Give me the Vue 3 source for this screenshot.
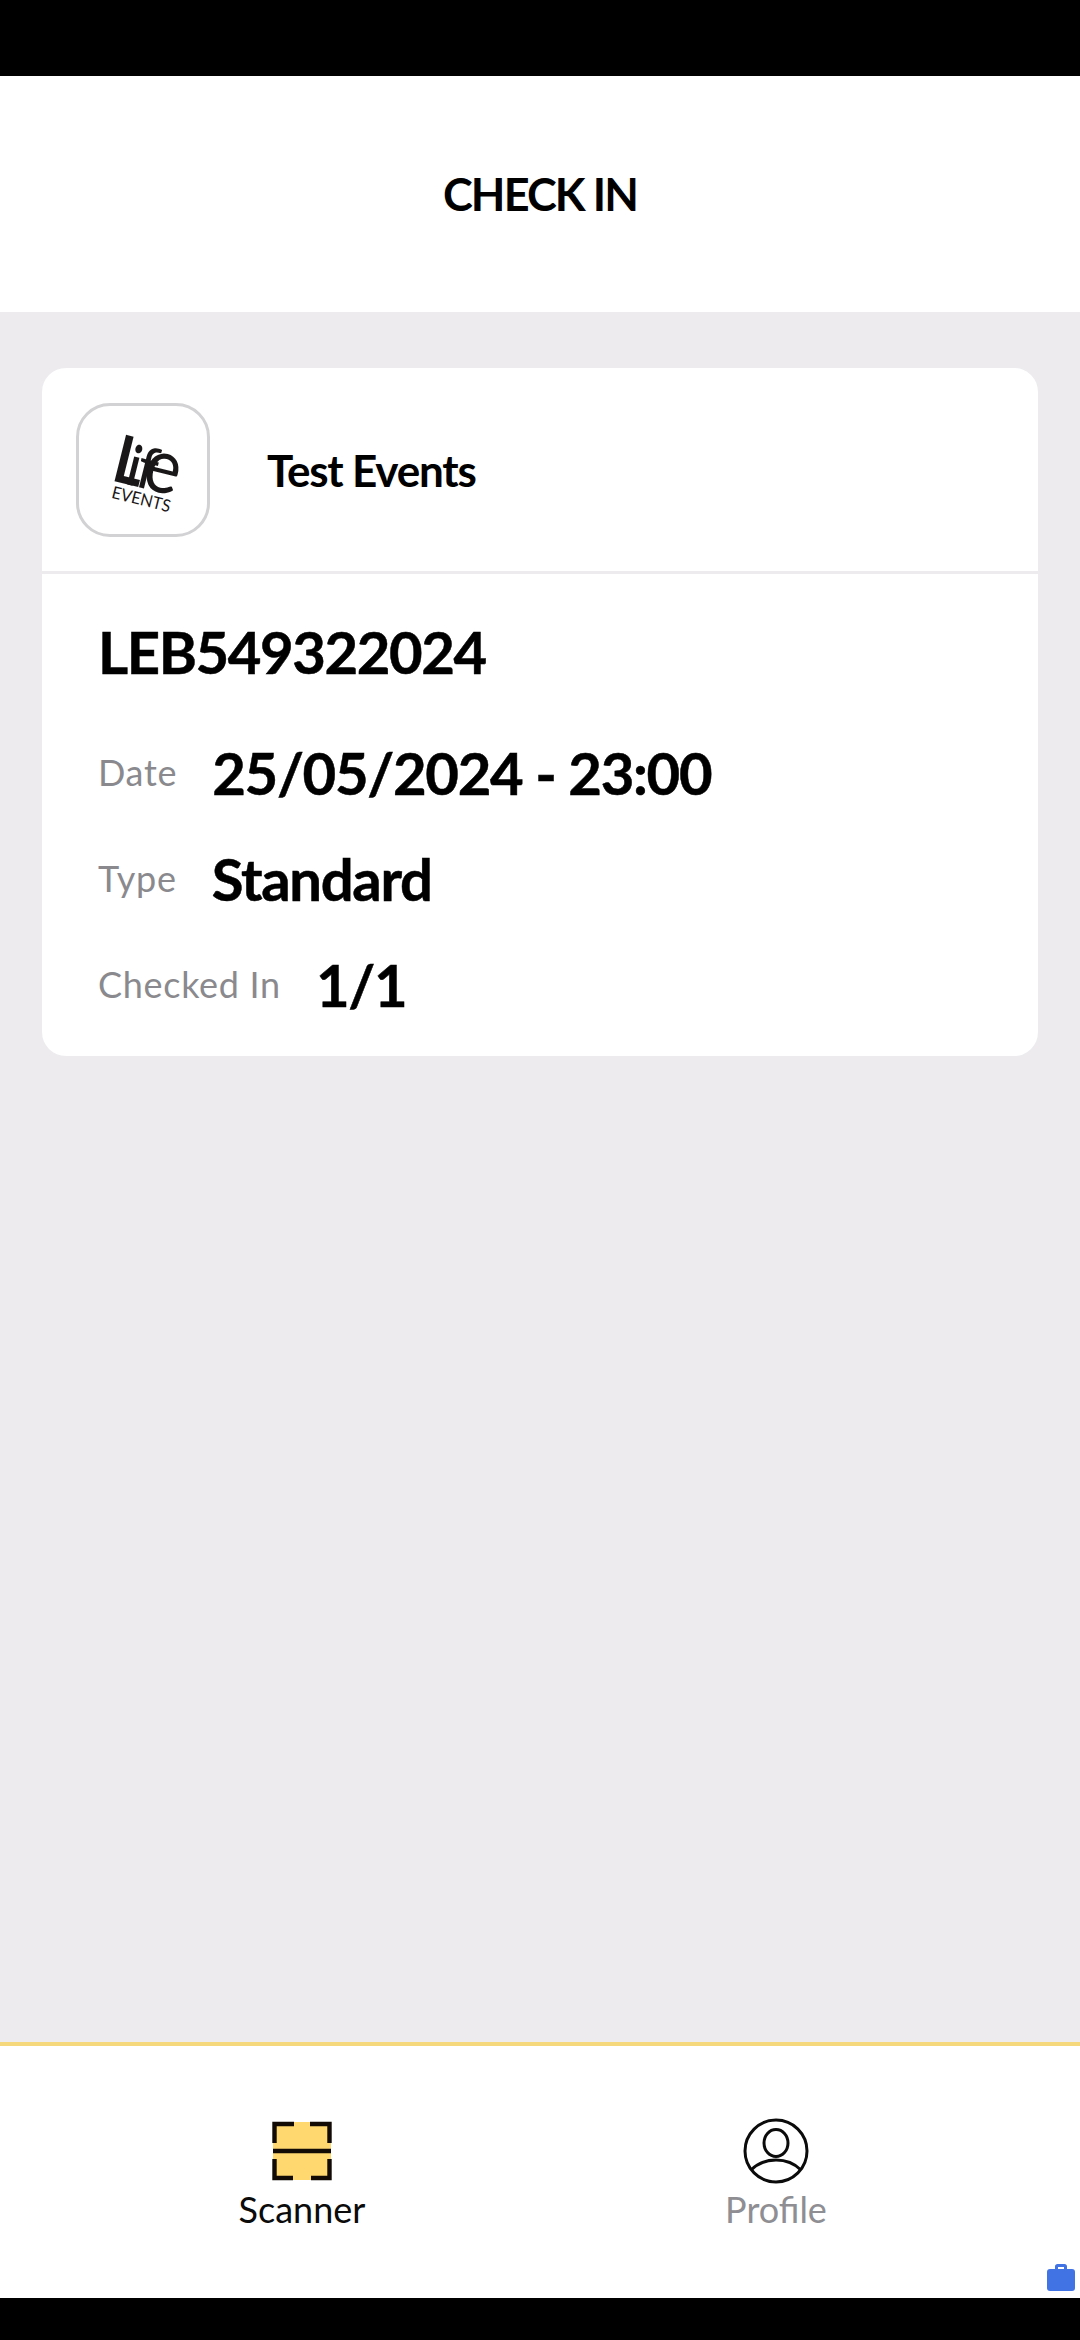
<script setup>
const rows = [
  { label: 'Date', value: '25/05/2024 - 23:00' },
  { label: 'Type', value: 'Standard' },
  { label: 'Checked In', value: '1/1' },
]
</script>

<template>
  <div class="screen">
    <div class="black top"></div>
    <header class="head">CHECK IN</header>
    <main class="main">
      <section class="card">
        <div class="org">
          <div class="logo">
            <svg width="128" height="128" viewBox="3 3 128 128">
              <g transform="translate(5 2) rotate(14 67 67)" fill="#1a1718" font-family="Lato, sans-serif">
                <text x="32" y="84" font-size="66" font-weight="700" textLength="30" lengthAdjust="spacingAndGlyphs">L</text>
                <text x="47" y="84" font-size="56" font-weight="700" textLength="11" lengthAdjust="spacingAndGlyphs">i</text>
                <text x="56" y="84" font-size="58" font-weight="400" textLength="20" lengthAdjust="spacingAndGlyphs">f</text>
                <text x="63" y="84" font-size="76" font-weight="400" textLength="36" lengthAdjust="spacingAndGlyphs">e</text>
                <text x="37" y="101" font-size="17" textLength="60" lengthAdjust="spacingAndGlyphs">EVENTS</text>
              </g>
            </svg>
          </div>
          <div class="org-name">Test Events</div>
        </div>
        <div class="body">
          <div class="code">LEB549322024</div>
          <div v-for="r in rows" :key="r.label" class="row">
            <span class="label">{{ r.label }}</span>
            <span class="value">{{ r.value }}</span>
          </div>
        </div>
      </section>
    </main>
    <nav class="tabs">
      <div class="tab first active">
        <div class="icon">
          <svg width="60" height="60" viewBox="0 0 60 60" fill="none">
            <rect x="1" y="1" width="58" height="58" fill="#ffd96f"/>
            <path d="M22 3H2.500V22M38 3H57.500V22M2.500 38V57H21M57.500 38V57H39" stroke="#120b05" stroke-width="4.400"/>
            <path d="M1 30H59" stroke="#120b05" stroke-width="4.400"/>
          </svg>
        </div>
        <span>Scanner</span>
      </div>
      <div class="tab second">
        <div class="icon">
          <svg width="66" height="66" viewBox="0 0 66 66" fill="none" stroke="#0b0b0b" stroke-width="3">
            <ellipse cx="33" cy="33" rx="31" ry="31"/>
            <ellipse cx="33" cy="25" rx="12" ry="13.500"/>
            <path d="M8 52C15 45 24 42 33 42C42 42 51 45 58 52"/>
          </svg>
        </div>
        <span>Profile</span>
      </div>
    </nav>
    <div class="black bottom"></div>
    <svg class="case" width="30" height="30" viewBox="0 0 30 30">
      <path d="M9 8V4.500C9 3 10 2 11.500 2H18.500C20 2 21 3 21 4.500V8H18V5H12V8Z" fill="#4273e4"/>
      <rect x="1" y="7" width="28" height="22" rx="3" fill="#4273e4"/>
    </svg>
  </div>
</template>

<style>
html, body { margin: 0; background: #fff; }
</style>

<style scoped>
.screen {
  position: relative;
  width: 1080px;
  height: 2340px;
  display: flex;
  flex-direction: column;
  font-family: Lato, sans-serif;
  overflow: hidden;
  background: #fff;
}
.black { background: #000; flex: none; }
.top { height: 76px; }
.bottom { height: 42px; }
.head {
  height: 236px;
  flex: none;
  display: flex;
  align-items: center;
  justify-content: center;
  font-size: 45px;
  font-weight: 700;
  letter-spacing: -1.900px;
  color: #000;
}
.main {
  flex: 1;
  background: #edebee;
  padding: 56px 42px;
}
.card {
  background: #fff;
  border-radius: 24px;
  height: 688px;
  overflow: hidden;
}
.org {
  height: 203px;
  border-bottom: 3px solid #edebee;
  display: flex;
  align-items: center;
  padding-left: 34px;
}
.logo {
  width: 134px;
  height: 134px;
  box-sizing: border-box;
  border: 3px solid #d2d1d3;
  border-radius: 34px;
  display: flex;
  align-items: center;
  justify-content: center;
  flex: none;
}
.org-name {
  margin-left: 57px;
  font-size: 44px;
  font-weight: 700;
  letter-spacing: -1.200px;
  color: #000;
}
.body { padding: 40px 56px 0; }
.code {
  font-size: 58px;
  font-weight: 700;
  letter-spacing: -1.400px;
  -webkit-text-stroke: 0.500px #000;
  color: #000;
  line-height: 76px;
}
.row {
  display: flex;
  align-items: center;
  height: 106px;
}
.code + .row { margin-top: 29px; }
.label {
  font-size: 36px;
  letter-spacing: 0.700px;
  color: #8a8a8e;
  margin-right: 35px;
}
.value {
  font-size: 58px;
  font-weight: 700;
  letter-spacing: -1.300px;
  -webkit-text-stroke: 0.500px #000;
  color: #000;
}
.tabs {
  height: 252px;
  flex: none;
  border-top: 4px solid #f5d77c;
  display: flex;
  background: #fff;
}
.tab {
  padding-top: 72px;
  display: flex;
  flex-direction: column;
  align-items: center;
  font-size: 36px;
  color: #8e8e93;
  line-height: 44px;
}
.first { width: 604px; }
.second { width: 344px; }
.icon {
  height: 66px;
  margin-bottom: 3px;
  display: flex;
  align-items: center;
  justify-content: center;
}
.tab.active { color: #0b0b0b; }
.case { position: absolute; left: 1046px; top: 2262px; }
</style>
